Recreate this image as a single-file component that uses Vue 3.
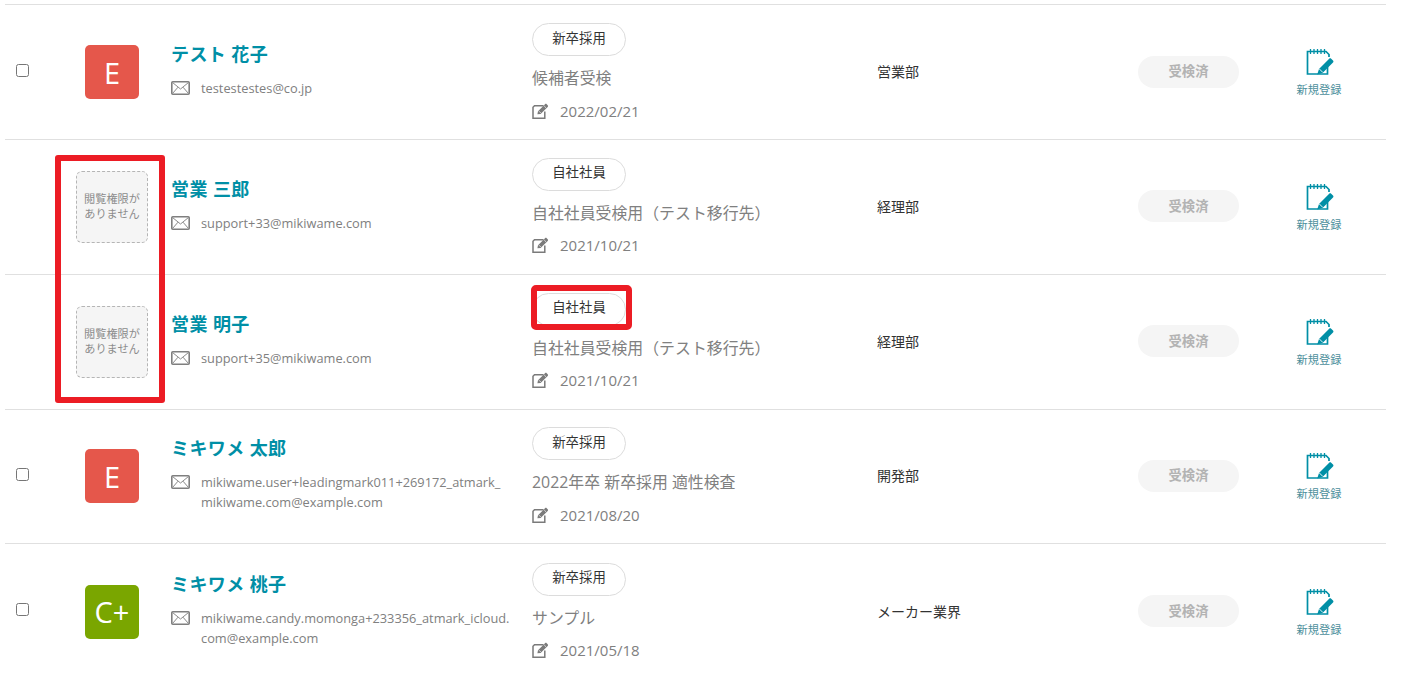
<template>
  <div class="page">
    <div class="list">
      <div v-for="row in rows" :key="row.name" class="row">
        <div class="col-check">
          <input v-if="row.grade" type="checkbox" class="check" />
        </div>
        <div class="col-avatar">
          <div v-if="row.grade" class="avatar" :class="row.color">{{ row.grade }}</div>
          <div v-else class="no-access">閲覧権限が<br />ありません</div>
        </div>
        <div class="col-user">
          <div class="name">{{ row.name }}</div>
          <div class="mail">
            <svg class="mail-icon" width="19" height="14" viewBox="0 0 19 14" fill="none">
              <rect x="0.8" y="0.8" width="17.4" height="12.4" rx="1" stroke="#7f7f7f" stroke-width="1.6" />
              <path d="M1.5 1.5 9.5 8l8-6.5M1.5 12.5 7 6.2M17.5 12.5 12 6.2" stroke="#8a8a8a" stroke-width="1" />
            </svg>
            <span class="mail-text">{{ row.email }}</span>
          </div>
        </div>
        <div class="col-exam">
          <span class="tag">{{ row.tag }}</span>
          <div class="exam-title">{{ row.exam }}</div>
          <div class="exam-date">
            <svg width="17" height="16" viewBox="0 0 17 16" fill="none">
              <path d="M11.5 2.8H2.5L1 4.3v10.9h11.8V8.5" stroke="#7a7a7a" stroke-width="1.5" />
              <path d="M5.4 11.2 6 8.2 13 1.2c.5-.5 1.2-.5 1.7 0l1 1c.5.5.5 1.2 0 1.7l-7.1 7z" fill="#7a7a7a" />
              <path d="M7 8.2l1.8 1.8M12.2 3l1.8 1.8" stroke="#fff" stroke-width="0.7" />
            </svg>
            <span>{{ row.date }}</span>
          </div>
        </div>
        <div class="col-dept">{{ row.dept }}</div>
        <div class="col-status"><span class="status">受検済</span></div>
        <div class="col-action">
          <svg class="action-icon" width="28" height="31" viewBox="0 0 28 31" fill="none">
            <path d="M21.5 15v11H1.5V3.5H20l3 3v2.5" stroke="#008fa6" stroke-width="1.7" />
            <path d="M4.5 1v5M8 1v5M11.5 1v5M15 1v5M18.5 1v5" stroke="#008fa6" stroke-width="1.3" />
            <path d="M11.2 26.5l1.8-5.5L23.2 10.8c.6-.6 1.4-.6 2 0l1.8 1.8c.6.6.6 1.4 0 2L16.8 24.8z" fill="#008fa6" />
            <path d="M13.2 20.8l3.5 3.5" stroke="#fff" stroke-width="0.9" />
          </svg>
          <span class="action-label">新規登録</span>
        </div>
      </div>
    </div>
    <div class="mark mark-avatar"></div>
    <div class="mark mark-tag"></div>
  </div>
</template>

<script setup>
const rows = [
  { name: "テスト 花子", email: "testestestes@co.jp", grade: "E", color: "red", tag: "新卒採用", exam: "候補者受検", date: "2022/02/21", dept: "営業部" },
  { name: "営業 三郎", email: "support+33@mikiwame.com", grade: "", color: "", tag: "自社社員", exam: "自社社員受検用（テスト移行先）", date: "2021/10/21", dept: "経理部" },
  { name: "営業 明子", email: "support+35@mikiwame.com", grade: "", color: "", tag: "自社社員", exam: "自社社員受検用（テスト移行先）", date: "2021/10/21", dept: "経理部" },
  { name: "ミキワメ 太郎", email: "mikiwame.user+leadingmark011+269172_atmark_\nmikiwame.com@example.com", grade: "E", color: "red", tag: "新卒採用", exam: "2022年卒 新卒採用 適性検査", date: "2021/08/20", dept: "開発部" },
  { name: "ミキワメ 桃子", email: "mikiwame.candy.momonga+233356_atmark_icloud.\ncom@example.com", grade: "C+", color: "green", tag: "新卒採用", exam: "サンプル", date: "2021/05/18", dept: "メーカー業界" },
];
</script>

<style>
html, body {
  background: #fff;
  overflow: hidden;
}
</style>

<style scoped>
.page {
  position: relative;
  width: 1401px;
  height: 676px;
  overflow: hidden;
  font-family: "Open Sans", "Noto Sans CJK JP", sans-serif;
  color: #808080;
}

.list {
  margin: 4.3px 15px 0 5px;
  border-top: 1px solid #e0e0e0;
}

.row {
  display: grid;
  grid-template-columns: 66px 100px 361px 345px 261px 158px 1fr;
  align-items: center;
  height: 134.75px;
  box-sizing: border-box;
  border-bottom: 1px solid #e0e0e0;
}

.row:last-child {
  border-bottom: none;
}

.col-check {
  padding-left: 11px;
  padding-bottom: 4px;
  display: flex;
}

.check {
  width: 13px;
  height: 13px;
  margin: 0;
}

.col-avatar {
  padding-left: 14px;
}

.avatar {
  width: 54px;
  height: 54px;
  border-radius: 5px;
  display: flex;
  align-items: center;
  justify-content: center;
  color: #fff;
  font-size: 29px;
}

.avatar.red {
  background: #e5574b;
}

.avatar.green {
  background: #7aa600;
}

.no-access {
  width: 72px;
  height: 72px;
  margin-left: -9px;
  box-sizing: border-box;
  border: 1px dashed #b5b5b5;
  border-radius: 6px;
  background: #f5f5f5;
  display: flex;
  align-items: center;
  justify-content: center;
  text-align: center;
  padding-bottom: 2px;
  font-size: 11.2px;
  line-height: 15px;
  color: #8c8c8c;
}

.name {
  font-size: 18px;
  font-weight: 700;
  letter-spacing: 0.4px;
  line-height: 24px;
  margin-top: -4px;
  color: #008fa6;
}

.mail {
  display: flex;
  align-items: flex-start;
  margin-top: 15px;
  width: 340px;
}

.mail-icon {
  flex-shrink: 0;
  margin-right: 11px;
}

.mail-text {
  font-size: 12.8px;
  line-height: 20px;
  margin-top: -3px;
  white-space: pre-line;
  color: #808080;
}

.col-exam {
  display: flex;
  flex-direction: column;
  align-items: flex-start;
  padding-top: 1.5px;
}

.tag {
  width: 94px;
  height: 33px;
  box-sizing: border-box;
  border: 1px solid #dcdcdc;
  border-radius: 17px;
  display: flex;
  align-items: center;
  justify-content: center;
  padding-bottom: 6px;
  font-size: 13.4px;
  color: #333;
}

.exam-title {
  margin-top: 10px;
  font-size: 15.9px;
  line-height: 24px;
  color: #808080;
}

.exam-date {
  display: flex;
  align-items: center;
  gap: 11px;
  margin-top: 8.5px;
  font-size: 15px;
  line-height: 24px;
  color: #808080;
}

.col-dept {
  font-size: 14px;
  margin-bottom: 2px;
  color: #333;
}

.status {
  display: flex;
  align-items: center;
  justify-content: center;
  width: 101px;
  height: 32px;
  margin-bottom: 1px;
  padding-bottom: 2px;
  box-sizing: border-box;
  border-radius: 16px;
  background: #f5f5f5;
  font-size: 13.3px;
  font-weight: 700;
  color: #b3b3b3;
}

.col-action {
  display: flex;
  flex-direction: column;
  align-items: center;
  width: 46px;
  margin-bottom: -1px;
}

.action-icon {
  margin-left: 2px;
}

.action-label {
  font-size: 11.2px;
  line-height: 14px;
  margin-top: 4px;
  white-space: nowrap;
  color: #4d8f9c;
}

.mark {
  position: absolute;
  box-sizing: border-box;
  border: 6px solid #ec1c24;
  border-radius: 3px;
}

.mark-avatar {
  left: 55px;
  top: 155px;
  width: 110px;
  height: 248px;
}

.mark-tag {
  left: 531px;
  top: 285px;
  width: 101px;
  height: 45px;
  border-radius: 5px;
}
</style>
